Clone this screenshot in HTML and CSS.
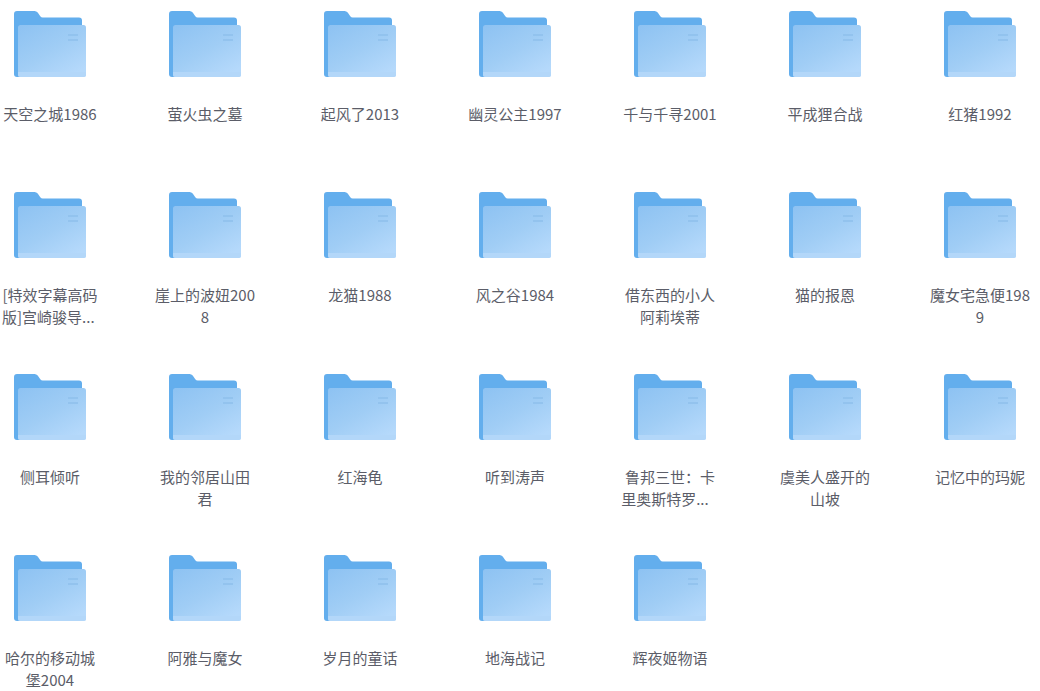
FILE: index.html
```html
<!DOCTYPE html>
<html lang="zh-CN">
<head>
<meta charset="utf-8">
<title>文件夹</title>
<link rel="stylesheet" href="styles.css">
</head>
<body>
<svg class="defs" width="0" height="0" aria-hidden="true">
  <defs>
    <linearGradient id="front" x1="0" y1="0" x2="0.75" y2="1">
      <stop offset="0" stop-color="#8dc2f2"/>
      <stop offset="0.55" stop-color="#a0cdf5"/>
      <stop offset="1" stop-color="#b5d9fb"/>
    </linearGradient>
    <symbol id="folder" viewBox="0 0 72 66">
      <path d="M0 3a3 3 0 0 1 3-3h17.500a4 4 0 0 1 3.200 1.600l2.600 3.600a3 3 0 0 0 2.500 1.300H65a3 3 0 0 1 3 3V60H0z" fill="#63aeed"/>
      <path d="M0 58h6v8H3a3 3 0 0 1-3-3z" fill="#63aeed"/>
      <rect x="4" y="14" width="68" height="52" rx="2.500" fill="url(#front)"/>
      <path d="M4 61h68v2.500a2.500 2.500 0 0 1-2.500 2.500h-63a2.500 2.500 0 0 1-2.500-2.500z" fill="#b3d7f9"/>
      <path d="M54 24h10M54 29h10" stroke="#8fc0ec" stroke-width="1.500"/>
    </symbol>
  </defs>
</svg>
<main class="grid">
  <div class="item"><svg class="icon"><use href="#folder"/></svg><div class="name">天空之城1986</div></div>
  <div class="item"><svg class="icon"><use href="#folder"/></svg><div class="name">萤火虫之墓</div></div>
  <div class="item"><svg class="icon"><use href="#folder"/></svg><div class="name">起风了2013</div></div>
  <div class="item"><svg class="icon"><use href="#folder"/></svg><div class="name">幽灵公主1997</div></div>
  <div class="item"><svg class="icon"><use href="#folder"/></svg><div class="name">千与千寻2001</div></div>
  <div class="item"><svg class="icon"><use href="#folder"/></svg><div class="name">平成狸合战</div></div>
  <div class="item"><svg class="icon"><use href="#folder"/></svg><div class="name">红猪1992</div></div>
  <div class="item"><svg class="icon"><use href="#folder"/></svg><div class="name">[特效字幕高码版]宫崎骏导...&nbsp;</div></div>
  <div class="item"><svg class="icon"><use href="#folder"/></svg><div class="name">崖上的波妞2008</div></div>
  <div class="item"><svg class="icon"><use href="#folder"/></svg><div class="name">龙猫1988</div></div>
  <div class="item"><svg class="icon"><use href="#folder"/></svg><div class="name">风之谷1984</div></div>
  <div class="item"><svg class="icon"><use href="#folder"/></svg><div class="name">借东西的小人阿莉埃蒂</div></div>
  <div class="item"><svg class="icon"><use href="#folder"/></svg><div class="name">猫的报恩</div></div>
  <div class="item"><svg class="icon"><use href="#folder"/></svg><div class="name">魔女宅急便1989</div></div>
  <div class="item"><svg class="icon"><use href="#folder"/></svg><div class="name">侧耳倾听</div></div>
  <div class="item"><svg class="icon"><use href="#folder"/></svg><div class="name">我的邻居山田君</div></div>
  <div class="item"><svg class="icon"><use href="#folder"/></svg><div class="name">红海龟</div></div>
  <div class="item"><svg class="icon"><use href="#folder"/></svg><div class="name">听到涛声</div></div>
  <div class="item"><svg class="icon"><use href="#folder"/></svg><div class="name">鲁邦三世：卡里奥斯特罗...&nbsp;&nbsp;&nbsp;</div></div>
  <div class="item"><svg class="icon"><use href="#folder"/></svg><div class="name">虞美人盛开的山坡</div></div>
  <div class="item"><svg class="icon"><use href="#folder"/></svg><div class="name">记忆中的玛妮</div></div>
  <div class="item"><svg class="icon"><use href="#folder"/></svg><div class="name">哈尔的移动城堡2004</div></div>
  <div class="item"><svg class="icon"><use href="#folder"/></svg><div class="name">阿雅与魔女</div></div>
  <div class="item"><svg class="icon"><use href="#folder"/></svg><div class="name">岁月的童话</div></div>
  <div class="item"><svg class="icon"><use href="#folder"/></svg><div class="name">地海战记</div></div>
  <div class="item"><svg class="icon"><use href="#folder"/></svg><div class="name">辉夜姬物语</div></div>
</main>
</body>
</html>
```
FILE: styles.css
```css
html, body {
  margin: 0;
  padding: 0;
  background: #fff;
}
.defs {
  position: absolute;
}
.grid {
  display: grid;
  grid-template-columns: repeat(7, 100px);
  grid-auto-rows: 181.33px;
  column-gap: 55px;
  padding-top: 11px;
  height: 680px;
  overflow: hidden;
}
.item {
  display: flex;
  flex-direction: column;
  align-items: center;
}
.icon {
  width: 72px;
  height: 66px;
  flex: none;
}
.name {
  width: 100%;
  margin-top: 26px;
  font: 15px/22px "Noto Sans CJK SC", sans-serif;
  color: #5b5d68;
  text-align: center;
  word-break: break-all;
}
```
